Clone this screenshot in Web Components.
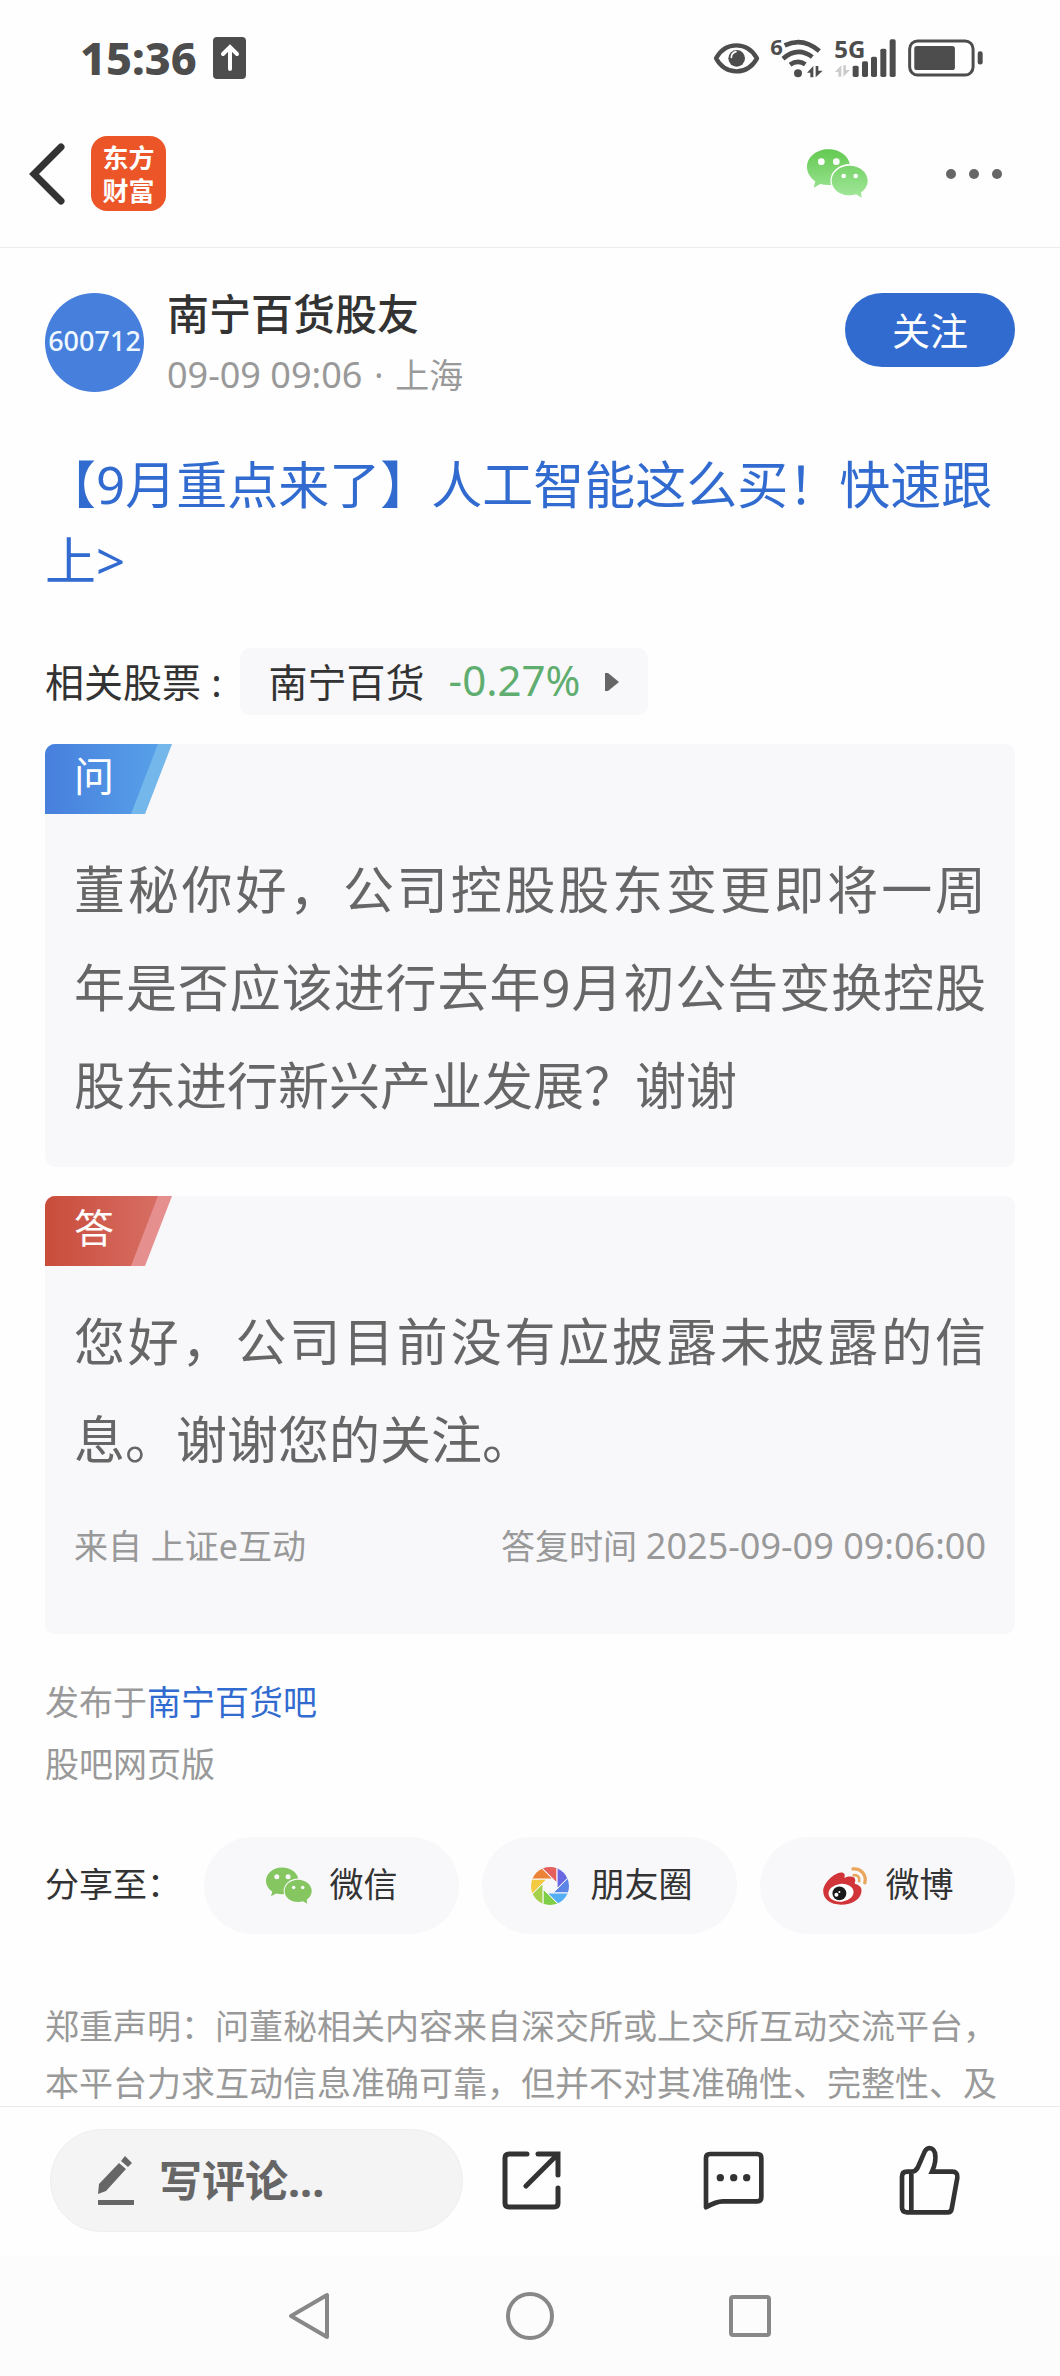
<!DOCTYPE html>
<html lang="zh-CN">
<head>
<meta charset="utf-8">
<meta name="viewport" content="width=device-width, initial-scale=1">
<title>南宁百货股友</title>
<style>
html, body{
    height:100%;
}
body{
    margin:0;
    background:#fefefe;
    color:#333;
    font-family:"Noto Sans", "Noto Sans CJK SC", sans-serif;
    font-size:34px;
    text-spacing-trim:space-all;
    --blue:#316bd0;
    --grey:#999;
    --panel:#f8f8fa;
    --side:45px;
}
</style>
</head>
<body>

<app-shell>
    <status-bar slot="top" time="15:36"></status-bar>
    <app-header slot="top"></app-header>

    <post-author name="南宁百货股友" code="600712" time="09-09 09:06" place="上海"></post-author>
    <post-title href="#topic">【9月重点来了】人工智能这么买！快速跟上&gt;</post-title>
    <stock-row name="南宁百货" change="-0.27%"></stock-row>

    <qa-card kind="ask" label="问">董秘你好，公司控股股东变更即将一周年是否应该进行去年9月初公告变换控股股东进行新兴产业发展？谢谢</qa-card>
    <qa-card kind="answer" label="答">您好，公司目前没有应披露未披露的信息。谢谢您的关注。
        <answer-source slot="foot" from="上证e互动" time="2025-09-09 09:06:00"></answer-source>
    </qa-card>

    <post-origin bar="南宁百货吧"></post-origin>
    <share-row>
        <share-pill icon="wechat">微信</share-pill>
        <share-pill icon="moments">朋友圈</share-pill>
        <share-pill icon="weibo">微博</share-pill>
    </share-row>
    <legal-note>郑重声明：问董秘相关内容来自深交所或上交所互动交流平台，本平台力求互动信息准确可靠，但并不对其准确性、完整性、及</legal-note>

    <comment-bar slot="bottom"></comment-bar>
    <system-nav slot="bottom"></system-nav>
</app-shell>

<script>
// one blade of the shutter, turned in steps of 45 degrees
const blades = ['#e5605c','#6a67e3','#5b86e8','#55aef2','#7fce47','#a5d04c','#f3c942','#ec8236']
    .map((c, i) => `<path d="M7-25V-3L-15-25z" fill="${c}" stroke="#f8f8fa" transform="rotate(${i * 45})"/>`).join('');

const bubbles = `
    <path d="M64 0c36 0 65 23 65 52s-29 55-65 55c-9 0-17-1-24-3L20 115l5-19C10 86 0 70 0 53 0 24 28 0 64 0z"/>
    <ellipse cx="128" cy="94" rx="58" ry="50" fill="var(--gap,#fefefe)"/>
    <path d="M128 49c30 0 54 20 54 45 0 14-8 27-20 35l2 16-17-10c-6 2-12 3-19 3-30 0-54-19-54-44s24-45 54-45z"/>
    <g fill="var(--gap,#fefefe)"><circle cx="43" cy="37" r="10"/><circle cx="88" cy="37" r="10"/>
    <circle cx="110" cy="80" r="7"/><circle cx="146" cy="80" r="7"/></g>`;

// name: [width, height, viewBox, markup]
const icons = {
    upload:[33, 42, '0 0 33 42', `<rect width="33" height="42" rx="4" fill="#4d4d4d"/>
        <path d="M17 32V12M10 17l7-7 7 7" fill="none" stroke="#fff" stroke-width="4" stroke-linecap="round"/>`],
    eye:[45, 30, '66 131 135 90', `<path d="M72 177c28-52 94-52 123 0-29 52-95 52-123 0z" fill="none" stroke="#4d4d4d" stroke-width="13" stroke-linejoin="round"/>
        <circle cx="134" cy="177" r="25" fill="#4d4d4d"/><path d="M118 174q1-14 14-17" fill="none" stroke="#fefefe" stroke-width="5" stroke-linecap="round"/>`],
    wifi:[52, 40, '237 110 156 120', `<text x="235" y="160" font-size="66" font-weight="700" font-family="Liberation Sans Narrow, Noto Sans, sans-serif" fill="#4d4d4d">6</text>
        <g fill="none" stroke="#4d4d4d" stroke-width="14"><path d="M278 132q54-26 104 17M273 172q44-38 88-5M294 190q24-16 46-1"/></g>
        <circle cx="318" cy="216" r="12" fill="#4d4d4d"/><path d="M345 214l19-20v34h-9v-14zM371 194h8v14h13l-21 20z" fill="#4d4d4d"/>`],
    signal:[61, 40, '425 112 183 120', `<text x="423" y="171" font-size="72" font-weight="700" font-family="Liberation Sans Narrow, Noto Sans, sans-serif" fill="#4d4d4d">5G</text>
        <path d="M425 214l19-20v34h-9v-14zM450 194h8v14h12l-20 20z" fill="#ccc"/>
        <g fill="#4d4d4d"><rect x="478" y="195" width="18" height="34" rx="5"/><rect x="506" y="182" width="18" height="47" rx="5"/>
        <rect x="533" y="168" width="18" height="61" rx="5"/><rect x="561" y="144" width="18" height="85" rx="5"/><rect x="589" y="116" width="18" height="113" rx="5"/></g>`],
    battery:[75, 38, '653 116 227 113', `<rect x="658" y="121" width="192" height="103" rx="24" fill="none" stroke="#4d4d4d" stroke-width="9"/>
        <rect x="672" y="136" width="123" height="73" rx="8" fill="#4d4d4d"/><rect x="864" y="152" width="15" height="40" rx="7" fill="#4d4d4d"/>`],
    back:[36, 62, '0 0 36 62', `<path d="M32 4L5 31l27 27" fill="none" stroke="#333" stroke-width="7" stroke-linecap="round"/>`],
    more:[58, 12, '0 0 58 12', `<g fill="#666"><circle cx="6" cy="6" r="5"/><circle cx="29" cy="6" r="5"/><circle cx="52" cy="6" r="5"/></g>`],
    chat:[61, 50, '0 0 183 148', `<defs><linearGradient id="g" gradientUnits="userSpaceOnUse" x1="0" y1="0" x2="0" y2="148"><stop stop-color="#64c952"/><stop offset="1" stop-color="#a3e89c"/></linearGradient></defs><g fill="url(#g)">${bubbles}</g>`],
    wechat:[46, 38, '0 0 183 148', `<g fill="#85c661">${bubbles}</g>`],
    moments:[46, 38, '-23 -19 46 38', `<defs><clipPath id="c"><circle r="19"/></clipPath></defs><g clip-path="url(#c)">${blades}</g>`],
    weibo:[46, 38, '870 191 136 115', `<path d="M872 264c0-24 33-55 54-56 11 0 13 7 10 16 15-6 32-6 33 6 1 6-3 9-1 12 12 3 20 10 20 20 0 26-28 43-62 43-31 0-54-15-54-41z" fill="#d1353a"/>
        <ellipse cx="926" cy="269" rx="38" ry="27" fill="#fff" transform="rotate(-7 926 269)"/><circle cx="921" cy="271" r="21" fill="#1a1a1a"/>
        <circle cx="912" cy="275" r="6" fill="#fff"/><circle cx="921" cy="267" r="3" fill="#fff"/>
        <g fill="none" stroke="#e8a75c" stroke-linecap="round"><path d="M962 197c23-3 42 17 36 42" stroke-width="10"/><path d="M964 216c12-2 20 7 17 18" stroke-width="8"/></g>`],
    play:[16, 20, '0 0 16 20', `<path d="M1 1h3l11 9-11 9H1z" fill="#666"/>`],
    pen:[36, 50, '0 0 36 50', `<path d="M21 7l7 6L8 35l-8 3 1-10zM27 0l7 7-4 4-7-6zM0 44h36v5H0z" fill="#666"/>`],
    share:[67, 61, '-1 -1 67 61', `<path d="M25 3H7Q3 3 3 7v45q0 4 4 4h45q4 0 4-4V37M36 3h20v21M54 5L24 35" fill="none" stroke="#333" stroke-width="5" stroke-linecap="round"/>`],
    comment:[61, 59, '510 225 183 177', `<path d="M519 394V246q0-12 12-12h142q12 0 12 12v118q0 12-12 12H570q-21 0-51 18z" fill="none" stroke="#333" stroke-width="14" stroke-linejoin="round"/>
        <g fill="#333"><circle cx="562" cy="305" r="11"/><circle cx="602" cy="305" r="11"/><circle cx="641" cy="305" r="11"/></g>`],
    like:[61, 69, '1090 195 183 207', `<path d="M1127 272h-13q-15 0-15 15v92q0 15 15 15h122q10 0 12-10l17-94q2-18-15-18h-61q14-30 9-56-5-15-17-15-9 1-14 11l-21 48q-6 12-19 12zM1127 272v122" fill="none" stroke="#333" stroke-width="14"/>`],
    navBack:[48, 48, '0 0 48 48', `<path d="M41 3v42L5 24z" fill="none" stroke="#888" stroke-width="4" stroke-linejoin="round"/>`],
    navHome:[48, 48, '0 0 48 48', `<circle cx="24" cy="24" r="22" fill="none" stroke="#888" stroke-width="4"/>`],
    navRecent:[48, 48, '0 0 48 48', `<rect x="5" y="5" width="38" height="38" rx="2" fill="none" stroke="#888" stroke-width="4"/>`]
};

function icon(name){
    const [w, h, box, body] = icons[name];
    return `<svg width="${w}" height="${h}" viewBox="${box}" aria-hidden="true">${body}</svg>`;
}

const base = `
    *{ box-sizing:border-box; }
    :host{ display:block; }
    svg{ display:block; flex:none; overflow:visible; }
    a{ color:inherit; text-decoration:none; }
    button{ font:inherit; color:inherit; border:0; padding:0; background:none; cursor:pointer; }
`;

// every element fills its open shadow root from view()
class ViewElement extends HTMLElement{
    constructor(){
        super();
        this.attachShadow({mode:'open'});
    }
    connectedCallback(){
        const template = document.createElement('template');
        template.innerHTML = `<style>${base}${this.css()}</style>${this.view()}`;
        this.shadowRoot.replaceChildren(template.content.cloneNode(true));
    }
    at(name){
        return this.getAttribute(name) || '';
    }
}

class AppShell extends ViewElement{
    css(){ return `
        :host{ display:flex; flex-direction:column; height:100%; }
        main{ flex:1; min-height:0; overflow:hidden; padding:45px var(--side) 0; }
    `; }
    view(){ return `<slot name="top"></slot><main><slot></slot></main><slot name="bottom"></slot>`; }
}

class StatusBar extends ViewElement{
    css(){ return `
        :host{ display:flex; align-items:center; gap:16px; padding:37px 77px 21px 80px; height:100px; box-sizing:border-box; color:#4d4d4d; }
        time{ font-size:45px; line-height:42px; font-weight:800; }
        .right{ display:flex; align-items:center; gap:12px; margin-left:auto; }
    `; }
    view(){ return `<time>${this.at('time')}</time>${icon('upload')}
        <div class="right">${icon('eye')}${icon('wifi')}${icon('signal')}${icon('battery')}</div>`; }
}

class AppHeader extends ViewElement{
    css(){ return `
        :host{ display:flex; align-items:center; height:148px; box-sizing:border-box; padding:0 57px 0 29px; border-bottom:1px solid #ebebeb; }
        .logo{ margin-left:26px; width:75px; height:75px; border-radius:16px; background:#eb5528; color:#fff; text-align:center;
            font:700 26px/33px "Noto Sans CJK SC", sans-serif; padding-top:4px; }
        .chat{ margin-left:auto; margin-right:77px; }
    `; }
    view(){ return `<button aria-label="返回">${icon('back')}</button>
        <div class="logo">东方<br>财富</div>
        <button class="chat" aria-label="分享到微信">${icon('chat')}</button>
        <button aria-label="更多">${icon('more')}</button>`; }
}

class PostAuthor extends ViewElement{
    css(){ return `
        :host{ display:flex; align-items:flex-start; }
        .avatar{ width:99px; height:99px; border-radius:50%; background:#467fdc; color:#f0f8ff; flex:none;
            display:flex; align-items:center; justify-content:center; font-size:27px; font-weight:500; padding-bottom:4px; }
        .who{ flex:1; padding-left:23px; }
        h2{ margin:0; font-size:42px; line-height:42px; font-weight:500; }
        p{ margin:22px 0 0; line-height:36px; color:var(--grey); }
        time{ font-size:36px; }
        i{ margin:0 3px; font-style:normal; }
        button{ width:170px; height:74px; border-radius:37px; background:var(--blue); color:#fff; font-size:38px; padding-bottom:4px; }
    `; }
    view(){ return `<div class="avatar">${this.at('code')}</div>
        <div class="who"><h2>${this.at('name')}</h2><p><time>${this.at('time')}</time> <i>·</i> ${this.at('place')}</p></div>
        <button>关注</button>`; }
}

class PostTitle extends ViewElement{
    css(){ return `
        h1{ margin:53px 0 0; font-size:51px; line-height:76px; font-weight:400; color:var(--blue); }
    `; }
    view(){ return `<h1><a href="${this.at('href')}"><slot></slot></a></h1>`; }
}

class StockRow extends ViewElement{
    css(){ return `
        :host{ display:flex; align-items:center; gap:18px; margin-top:50px; font-size:39px; }
        span{ padding-bottom:4px; }
        a{ display:flex; align-items:center; height:67px; padding:0 28px 0 29px; border-radius:10px; background:var(--panel); }
        b{ margin:0 24px; padding-bottom:4px; font-size:42px; font-weight:400; color:#5fae70; }
    `; }
    view(){ return `<span>相关股票 :</span><a href="#stock"><span>${this.at('name')}</span><b>${this.at('change')}</b>${icon('play')}</a>`; }
}

class QaCard extends ViewElement{
    css(){ return `
        :host{ margin-top:29px; border-radius:10px; background:var(--panel); overflow:hidden; padding-bottom:33px;
            --from:#477fdd; --to:#59a4ea; --edge:#74b7eb; }
        :host([kind="answer"]){ --from:#c94c3a; --to:#d97269; --edge:#e5908f; }
        .tag{ width:127px; height:70px; padding-left:29px; color:#fff; font-size:40px; line-height:64px;
            clip-path:polygon(0 0, 127px 0, 100px 100%, 0 100%); background:var(--edge); position:relative; }
        .tag::before{ content:""; position:absolute; inset:0; background:linear-gradient(90deg, var(--from), var(--to));
            clip-path:polygon(0 0, 113px 0, 86px 100%, 0 100%); }
        .tag span{ position:relative; }
        p{ margin:26px 29px 0; font-size:51px; line-height:98px; color:#666; text-align:justify; }
    `; }
    view(){ return `<div class="tag"><span>${this.at('label')}</span></div><p><slot></slot></p><slot name="foot"></slot>`; }
}

class AnswerSource extends ViewElement{
    css(){ return `
        :host{ display:flex; justify-content:space-between; margin:30px 29px 27px; line-height:56px; color:var(--grey); }
        time{ font-size:36px; }
    `; }
    view(){ return `<span>来自 ${this.at('from')}</span><span>答复时间 <time>${this.at('time')}</time></span>`; }
}

class PostOrigin extends ViewElement{
    css(){ return `
        :host{ margin-top:37px; line-height:62px; color:var(--grey); }
        div{ height:62px; }
        .bar{ color:var(--blue); }
    `; }
    view(){ return `<div>发布于<a class="bar" href="#bar">${this.at('bar')}</a></div><div><a href="#web">股吧网页版</a></div>`; }
}

class ShareRow extends ViewElement{
    css(){ return `
        :host{ display:flex; align-items:center; gap:23px; margin-top:42px; }
        span{ width:136px; flex:none; padding-bottom:6px; }
    `; }
    view(){ return `<span>分享至：</span><slot></slot>`; }
}

class SharePill extends ViewElement{
    css(){ return `
        :host{ flex:1; }
        button{ display:flex; align-items:center; justify-content:center; gap:18px; width:100%; height:97px;
            border-radius:49px; background:var(--panel); --gap:var(--panel); }
        span{ padding-bottom:6px; }
    `; }
    view(){ return `<button>${icon(this.at('icon'))}<span><slot></slot></span></button>`; }
}

class LegalNote extends ViewElement{
    css(){ return `
        p{ margin:64px 0 0; line-height:57px; color:var(--grey); }
    `; }
    view(){ return `<p><slot></slot></p>`; }
}

class CommentBar extends ViewElement{
    css(){ return `
        :host{ display:flex; align-items:center; height:150px; box-sizing:border-box; padding:0 100px 2px 50px;
            border-top:1px solid #eaeaea; background:#fefefe; }
        label{ display:flex; align-items:center; gap:25px; flex:0 1 413px; min-width:0; height:103px; padding:0 47px;
            border:1px solid #eee; border-radius:52px; background:#f4f4f4; }
        input{ flex:1; min-width:0; border:0; outline:0; padding:0; background:none; color:#666; font:700 43px/60px "Noto Sans", "Noto Sans CJK SC", sans-serif; }
        input::placeholder{ color:#666; opacity:1; }
        .acts{ flex:1; display:flex; align-items:center; justify-content:space-between; margin-left:38px; }
    `; }
    view(){ return `<label>${icon('pen')}<input type="text" placeholder="写评论..." aria-label="写评论"></label>
        <div class="acts"><button aria-label="转发">${icon('share')}</button>
        <button aria-label="评论">${icon('comment')}</button>
        <button aria-label="点赞">${icon('like')}</button></div>`; }
}

class SystemNav extends ViewElement{
    css(){ return `
        :host{ display:flex; align-items:center; justify-content:center; gap:172px; height:120px; background:#fcfcfc; }
    `; }
    view(){ return `<button aria-label="后退">${icon('navBack')}</button>
        <button aria-label="主页">${icon('navHome')}</button>
        <button aria-label="最近任务">${icon('navRecent')}</button>`; }
}

customElements.define('app-shell', AppShell);
customElements.define('status-bar', StatusBar);
customElements.define('app-header', AppHeader);
customElements.define('post-author', PostAuthor);
customElements.define('post-title', PostTitle);
customElements.define('stock-row', StockRow);
customElements.define('qa-card', QaCard);
customElements.define('answer-source', AnswerSource);
customElements.define('post-origin', PostOrigin);
customElements.define('share-row', ShareRow);
customElements.define('share-pill', SharePill);
customElements.define('legal-note', LegalNote);
customElements.define('comment-bar', CommentBar);
customElements.define('system-nav', SystemNav);
</script>
</body>
</html>
